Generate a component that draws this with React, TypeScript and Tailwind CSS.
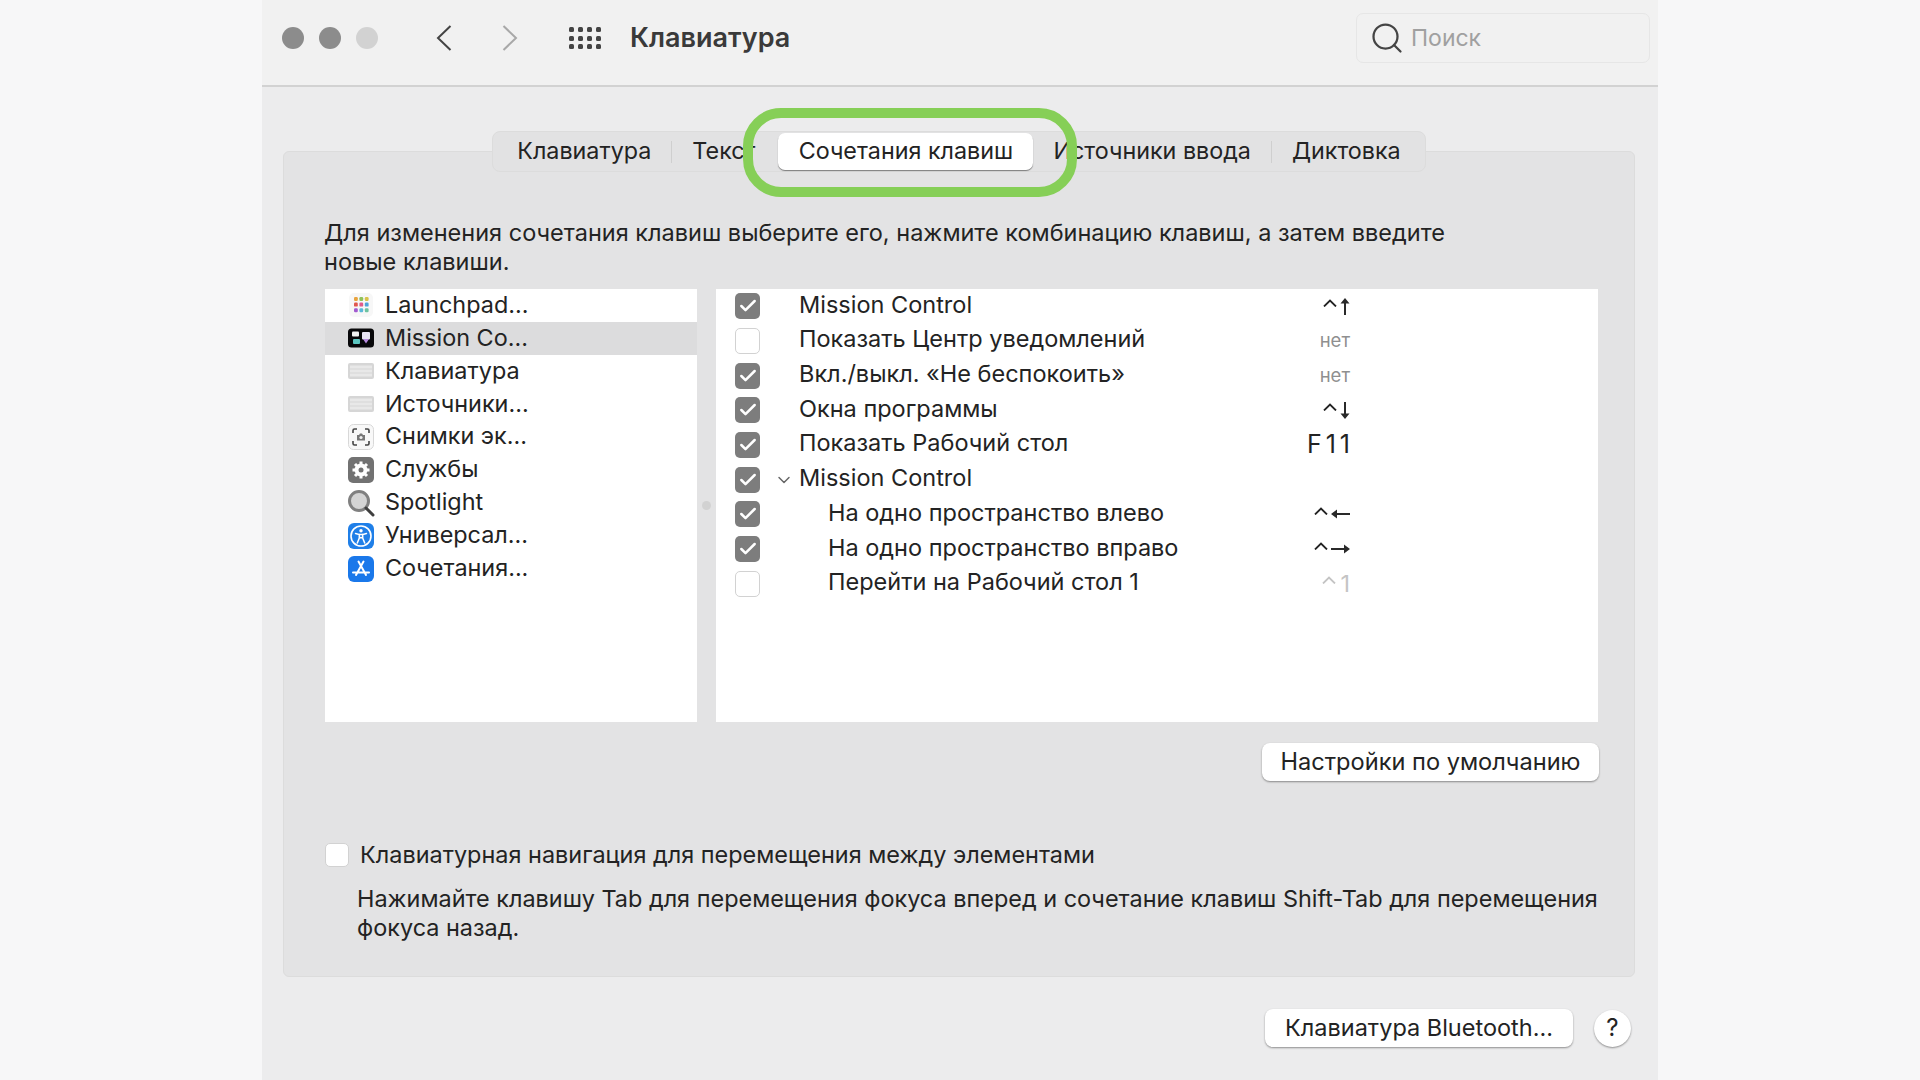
import React from 'react';
import { ChevronDown, Search, Check } from 'lucide-react';

// Small icons of the left list
function LaunchpadIcon() {
    const colors = ['#e8a33d', '#8fc25a', '#d9c24a', '#e0584f', '#e05a8a', '#4fa3d9', '#a25ad0', '#5ab8d9', '#6cc2a0'];
    return (
        <svg viewBox="0 0 26 26" className="w-[26px] h-[26px]">
            <rect x="1" y="1" width="24" height="24" rx="5" fill="#f7f7f7" />
            {colors.map((c, i) => (
                <rect key={i} x={6 + (i % 3) * 5.4} y={5 + Math.floor(i / 3) * 5.6} width="3.8" height="4" rx="1.2" fill={c} />
            ))}
        </svg>
    );
}

function MissionIcon() {
    return (
        <svg viewBox="0 0 26 20" className="w-[26px] h-[20px]">
            <rect width="26" height="19" y="0.5" rx="3.5" fill="#08080a" />
            <rect x="4" y="3.5" width="7" height="5" rx="1" fill="#f2f2f2" />
            <rect x="5" y="11" width="7" height="5" rx="1" fill="#5cc6c0" />
            <rect x="14" y="4" width="8" height="7.5" rx="1" fill="#e8e4f4" />
            <path d="M15 11h6l-3 4.5z" fill="#b78adf" />
        </svg>
    );
}

function KeyboardIcon() {
    return (
        <svg viewBox="0 0 26 16" className="w-[26px] h-[16px]">
            <rect width="26" height="16" rx="2" fill="#d6d6d6" />
            <rect x="2" y="2.5" width="22" height="3" fill="#e8e8e8" />
            <rect x="2" y="6.5" width="22" height="3" fill="#e8e8e8" />
            <rect x="2" y="10.5" width="22" height="3" fill="#e8e8e8" />
        </svg>
    );
}

function ScreenshotIcon() {
    return (
        <svg viewBox="0 0 26 26" className="w-[26px] h-[26px]">
            <rect x="0.5" y="0.5" width="25" height="25" rx="5" fill="#f8f8f8" stroke="#d8d8d8" />
            <path d="M5 9V6.5A1.5 1.5 0 0 1 6.5 5H9M17 5h2.5A1.5 1.5 0 0 1 21 6.5V9M21 17v2.5a1.5 1.5 0 0 1-1.5 1.5H17M9 21H6.5A1.5 1.5 0 0 1 5 19.5V17" fill="none" stroke="#444" strokeWidth="1.6" />
            <path d="M9 11h2l1-1.5h2l1 1.500h2v5.500H9z" fill="#777" />
            <circle cx="13" cy="13.5" r="1.600" fill="#eee" />
        </svg>
    );
}

function ServicesIcon() {
    return (
        <svg viewBox="0 0 26 26" className="w-[26px] h-[26px]">
            <rect width="26" height="26" rx="5" fill="#727272" />
            <g stroke="#fff" strokeWidth="3">
                <path d="M13 4.500v17M4.500 13h17M7 7l12 12M19 7L7 19" />
            </g>
            <circle cx="13" cy="13" r="6.500" fill="#fff" />
            <circle cx="13" cy="13" r="2.500" fill="#727272" />
        </svg>
    );
}

function SpotlightIcon() {
    return (
        <svg viewBox="0 0 28 28" className="w-[28px] h-[28px]">
            <circle cx="12" cy="12" r="9.500" fill="#d4d4d4" stroke="#808080" strokeWidth="3" />
            <path d="M19 19l7 7" stroke="#3f3f3f" strokeWidth="3" strokeLinecap="round" />
        </svg>
    );
}

function AccessIcon() {
    return (
        <svg viewBox="0 0 26 26" className="w-[26px] h-[26px]">
            <rect width="26" height="26" rx="6" fill="#1f7fe8" />
            <circle cx="13" cy="13" r="10" fill="none" stroke="#fff" strokeWidth="1.600" />
            <circle cx="13" cy="7.800" r="1.700" fill="#fff" />
            <path d="M7.500 10.500l3.800 1v3.500l-2 5M18.500 10.500l-3.800 1v3.500l2 5M11.300 11.500h3.400M11.300 15l1.700-.5 1.700.5" fill="none" stroke="#fff" strokeWidth="1.500" strokeLinecap="round" />
        </svg>
    );
}

function StoreIcon() {
    return (
        <svg viewBox="0 0 26 26" className="w-[26px] h-[26px]">
            <rect width="26" height="26" rx="6" fill="#1a78ea" />
            <path d="M15.500 5.500L8 19M10.500 5.500L18 19M5 16.500h16" fill="none" stroke="#fff" strokeWidth="2" strokeLinecap="round" />
        </svg>
    );
}

// Control key and arrow keys of the shortcut column
function Caret() {
    return (
        <svg viewBox="0 0 14 8" className="w-[14px] h-[8px] mb-[7px]" fill="none" stroke="currentColor" strokeWidth="1.8">
            <path d="M1 7.500L7 1.500l6 6" />
        </svg>
    );
}

function UpArrow() {
    return (
        <svg viewBox="0 0 10 17" className="w-[10px] h-[17px]" fill="#2a2a2a">
            <path d="M5 0l4.500 5.500H6V17H4V5.500H.5z" />
        </svg>
    );
}

function DownArrow() {
    return (
        <svg viewBox="0 0 10 17" className="w-[10px] h-[17px]" fill="#2a2a2a">
            <path d="M5 17L.5 11.500H4V0h2v11.500h3.500z" />
        </svg>
    );
}

function LeftArrow() {
    return (
        <svg viewBox="0 0 19 10" className="w-[19px] h-[10px]" fill="#2a2a2a">
            <path d="M0 5l6-4.500V4h13v2H6v3.500z" />
        </svg>
    );
}

function RightArrow() {
    return (
        <svg viewBox="0 0 19 10" className="w-[19px] h-[10px]" fill="#2a2a2a">
            <path d="M19 5l-6-4.500V4H0v2h13v3.500z" />
        </svg>
    );
}

const apps = [
    { label: 'Launchpad...', icon: <LaunchpadIcon /> },
    { label: 'Mission Co...', icon: <MissionIcon />, active: true },
    { label: 'Клавиатура', icon: <KeyboardIcon /> },
    { label: 'Источники...', icon: <KeyboardIcon /> },
    { label: 'Снимки эк...', icon: <ScreenshotIcon /> },
    { label: 'Службы', icon: <ServicesIcon /> },
    { label: 'Spotlight', icon: <SpotlightIcon /> },
    { label: 'Универсал...', icon: <AccessIcon /> },
    { label: 'Сочетания...', icon: <StoreIcon /> },
];

type Shortcut = {
    label: string;
    checked: boolean;
    keys?: React.ReactNode;
    nested?: boolean;
    group?: boolean;
};

const none = <span className="text-[18.5px] text-[#8f8f8f]">нет</span>;

const shortcuts: Shortcut[] = [
    { label: 'Mission Control', checked: true, keys: <><Caret /><UpArrow /></> },
    { label: 'Показать Центр уведомлений', checked: false, keys: none },
    { label: 'Вкл./выкл. «Не беспокоить»', checked: true, keys: none },
    { label: 'Окна программы', checked: true, keys: <><Caret /><DownArrow /></> },
    { label: 'Показать Рабочий стол', checked: true, keys: <span className="-mr-[4px] text-[25px] tracking-[4px]">F11</span> },
    { label: 'Mission Control', checked: true, group: true },
    { label: 'На одно пространство влево', checked: true, keys: <><Caret /><LeftArrow /></>, nested: true },
    { label: 'На одно пространство вправо', checked: true, keys: <><Caret /><RightArrow /></>, nested: true },
    { label: 'Перейти на Рабочий стол 1', checked: false, keys: <span className="flex items-center gap-[4px] text-[#c4c4c4]"><Caret /><span>1</span></span>, nested: true },
];

const tabs = ['Клавиатура', 'Текст', 'Сочетания клавиш', 'Источники ввода', 'Диктовка'];

function Tabs() {
    return (
        <div className="relative z-10 -mb-[21px] mx-auto h-[41px] flex items-center rounded-[8px] bg-[#e2e2e3] border border-[#dcdcdc] px-[4px] text-[23.3px] text-[#232323]">
            {tabs.map((tab, i) => {
                const selected = i === 2;
                return (
                    <React.Fragment key={tab}>
                        {selected ? (
                            <div className="relative h-[37px] w-[255px] pb-[1px] flex items-center justify-center rounded-[7px] bg-white shadow-[0_1px_1px_rgba(0,0,0,0.45)]">
                                {tab}
                                {/* green highlight drawn over the tabs */}
                                <div className="absolute -left-[35px] -right-[44px] -top-[25px] -bottom-[27px] rounded-[38px] border-[10px] border-[#86cf57]" />
                            </div>
                        ) : (
                            <div className={`pl-[20px] pb-[1px] ${i === 1 ? 'pr-[23px]' : 'pr-[20px]'}`}>{tab}</div>
                        )}
                        {(i === 0 || i === 3) && <div className="w-px h-[22px] bg-[#cfcfcf]" />}
                    </React.Fragment>
                );
            })}
        </div>
    );
}

export default function App() {
    return (
        <div
            className="h-[1080px] w-full overflow-hidden bg-[#f7f7f8] flex justify-center"
            style={{ fontFamily: 'Inter, "Liberation Sans", sans-serif' }}
        >
            <div className="w-[1396px] h-full bg-[#ececed] flex flex-col">
                {/* Title bar */}
                <div className="h-[87px] shrink-0 bg-[#f1f1f1] border-b-2 border-[#d2d2d2] flex items-center pl-[20px] pr-[8px] pb-[9px]">
                    <div className="flex items-center gap-[15px]">
                        <span className="w-[22px] h-[22px] rounded-full bg-[#8c8c8c]" />
                        <span className="w-[22px] h-[22px] rounded-full bg-[#8c8c8c]" />
                        <span className="w-[22px] h-[22px] rounded-full bg-[#d2d2d2]" />
                    </div>
                    <svg viewBox="0 0 16 26" className="ml-[58px] w-[16px] h-[26px]" fill="none" stroke="#444" strokeWidth="2">
                        <path d="M14.500 1L2 13l12.500 12" />
                    </svg>
                    <svg viewBox="0 0 16 26" className="ml-[50px] w-[16px] h-[26px]" fill="none" stroke="#a8a8a8" strokeWidth="2">
                        <path d="M1.500 1L14 13 1.500 25" />
                    </svg>
                    <div className="ml-[51px] grid grid-cols-4 gap-x-[4px] gap-y-[3.5px]">
                        {Array.from({ length: 12 }).map((_, i) => (
                            <span key={i} className="w-[5px] h-[5px] rounded-[1.5px] bg-[#444]" />
                        ))}
                    </div>
                    <div className="ml-[29px] text-[27px] font-semibold text-[#3a3a3a]">Клавиатура</div>
                    <div className="ml-auto w-[294px] h-[50px] rounded-[7px] border border-[#e6e6e6] bg-[#f1f1f1] flex items-center pl-[12px] gap-[6px]">
                        <Search className="w-[36px] h-[36px] text-[#444]" strokeWidth={1.5} />
                        <span className="text-[23px] text-[#a0a0a0]">Поиск</span>
                    </div>
                </div>

                <div className="flex-1 flex flex-col pl-[21px] pr-[23px] pt-[44px]">
                    <Tabs />

                    {/* Group box */}
                    <div className="h-[826px] rounded-[6px] bg-[#e3e3e4] border border-[#dcdcdc] pt-[66px] pl-[40px] pr-[35px] flex flex-col">
                        <p className="text-[23.5px] leading-[29px] text-[#232323] w-[1150px]">
                            Для изменения сочетания клавиш выберите его, нажмите комбинацию клавиш, а затем введите новые клавиши.
                        </p>

                        <div className="mt-[13px] flex">
                            {/* Left list */}
                            <div className="ml-[1px] w-[372px] h-[433px] bg-white text-[23.4px] text-[#232323]">
                                {apps.map(app => (
                                    <div key={app.label} className={`h-[32.9px] flex items-center ${app.active ? 'bg-[#dcdcdd]' : ''}`}>
                                        <span className="ml-[22px] w-[28px] flex items-center justify-center">{app.icon}</span>
                                        <span className="ml-[10px] pb-[2px]">{app.label}</span>
                                    </div>
                                ))}
                            </div>

                            <div className="w-[19px] flex items-center justify-center">
                                <span className="w-[9px] h-[9px] rounded-full bg-[#d2d2d2]" />
                            </div>

                            {/* Right table */}
                            <div className="w-[882px] h-[433px] bg-white text-[23.5px] text-[#232323]">
                                {shortcuts.map((row, i) => (
                                    <div key={i} className="h-[34.7px] flex items-center">
                                        <span className={`ml-[19px] w-[25px] h-[26px] rounded-[5px] flex items-center justify-center ${row.checked ? 'bg-[#7d7d7d]' : 'bg-white border-[1.5px] border-[#d2d2d2]'}`}>
                                            {row.checked && <Check className="w-[20px] h-[20px] text-white" strokeWidth={3} />}
                                        </span>
                                        <span className={`flex items-center justify-center w-[24px] ml-[12px] ${row.group ? '' : 'invisible'}`}>
                                            <ChevronDown className="w-[20px] h-[20px] text-[#666]" strokeWidth={1.75} />
                                        </span>
                                        <span className={`pb-[4px] ${row.nested ? 'ml-[32px]' : 'ml-[3px]'}`}>{row.label}</span>
                                        <span className="ml-auto mr-[248px] flex items-center gap-[3px]">{row.keys}</span>
                                    </div>
                                ))}
                            </div>
                        </div>

                        <div className="mt-[21px] flex justify-end">
                            <button className="w-[337px] h-[38px] rounded-[8px] bg-white text-[23.6px] text-[#232323] shadow-[0_1px_2px_rgba(0,0,0,0.4)]">
                                Настройки по умолчанию
                            </button>
                        </div>

                        <div className="mt-[56px] flex items-center ml-[1px]">
                            <span className="w-[24px] h-[24px] rounded-[5px] bg-white border-[1.5px] border-[#d2d2d2]" />
                            <span className="ml-[11px] text-[23.45px] text-[#232323]">Клавиатурная навигация для перемещения между элементами</span>
                        </div>
                        <p className="mt-[12px] ml-[33px] -mr-[12px] text-[23.45px] leading-[29px] text-[#232323]">
                            Нажимайте клавишу Tab для перемещения фокуса вперед и сочетание клавиш Shift-Tab для перемещения фокуса назад.
                        </p>
                    </div>

                    {/* Footer buttons */}
                    <div className="mt-[32px] flex items-center justify-end gap-[21px] pr-[4px]">
                        <button className="w-[308px] h-[38px] rounded-[8px] bg-white text-[23.5px] text-[#232323] shadow-[0_1px_2px_rgba(0,0,0,0.4)]">
                            Клавиатура Bluetooth...
                        </button>
                        <button className="w-[37px] h-[37px] rounded-full bg-white text-[24px] text-[#232323] shadow-[0_1px_2px_rgba(0,0,0,0.4)]">
                            ?
                        </button>
                    </div>
                </div>
            </div>
        </div>
    );
}
